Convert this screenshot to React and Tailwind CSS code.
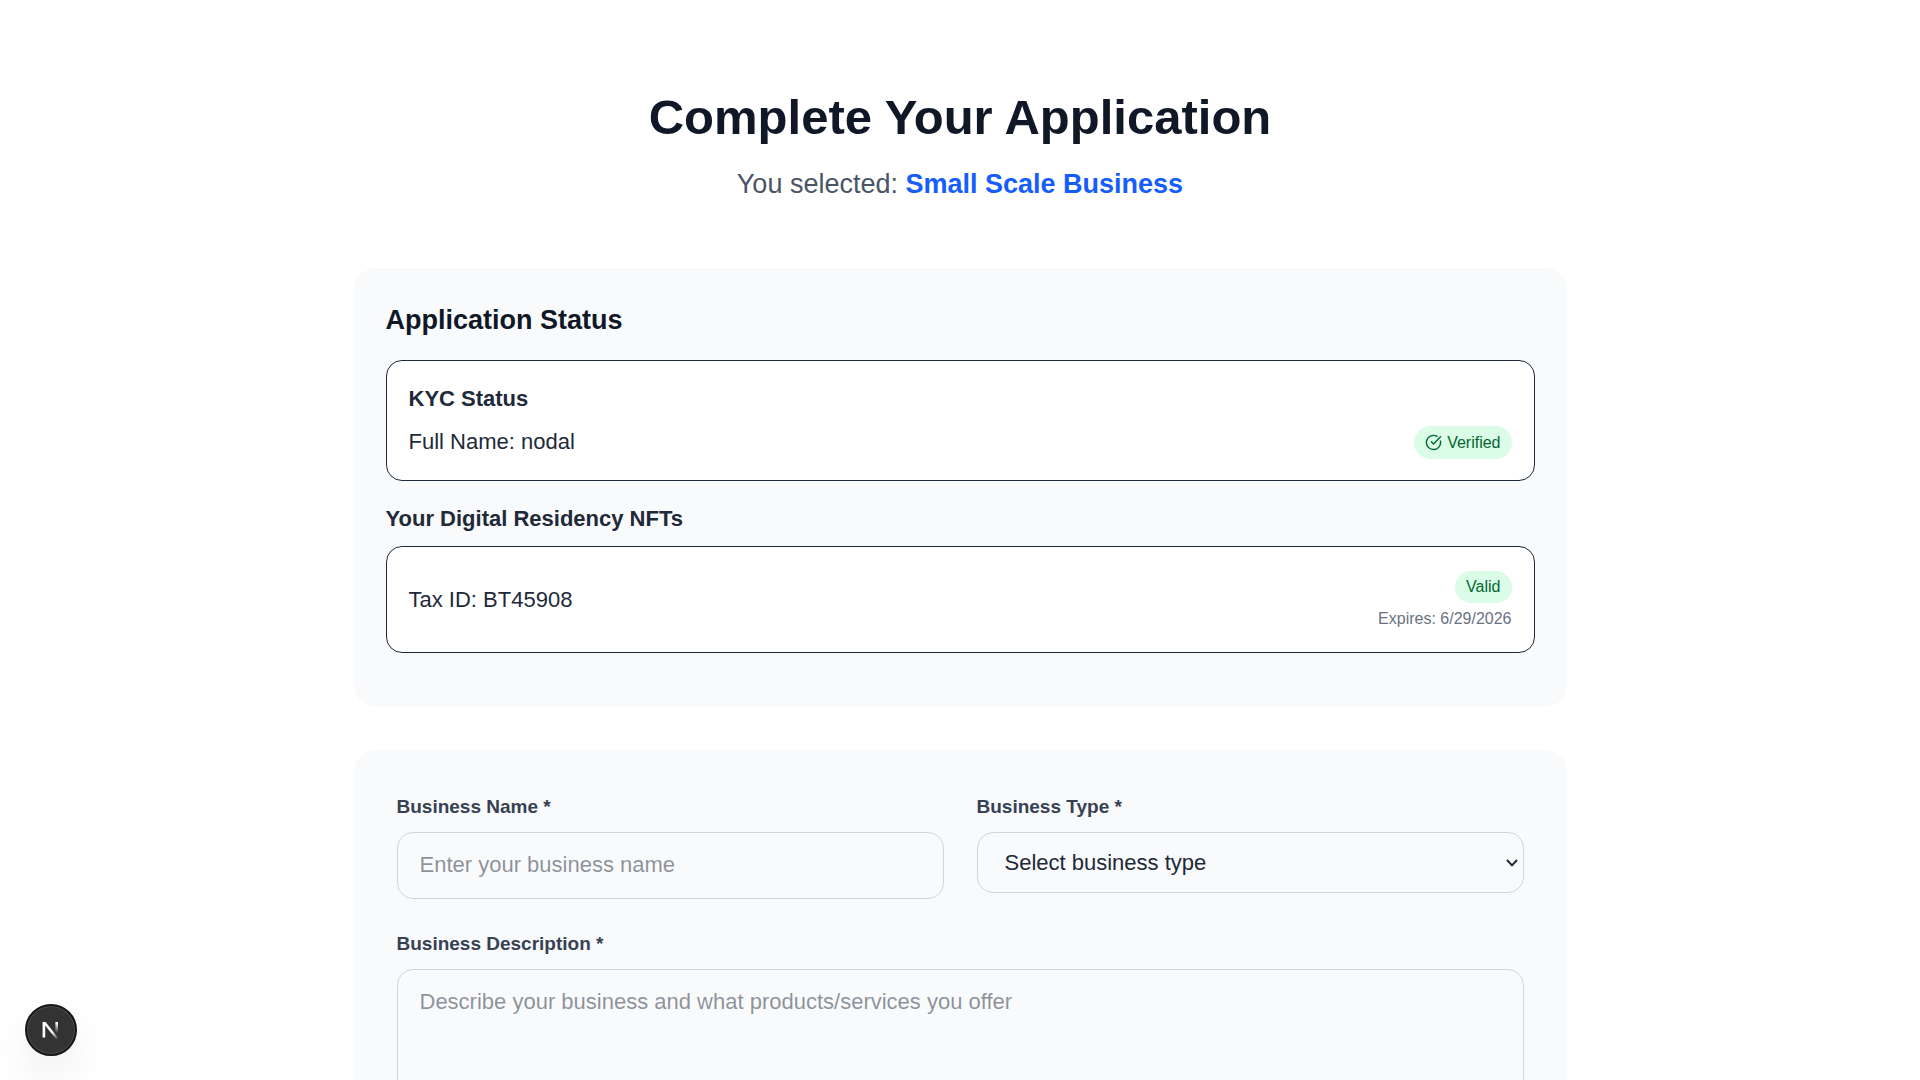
import { CircleCheckBig } from "lucide-react";

const labelClass = "mb-[13px] block text-[19px] leading-[25px] font-semibold text-gray-700";
const fieldClass = "block w-full rounded-[16px] border border-gray-300 bg-gray-50 text-[22px] leading-[31px] text-gray-800";

function NextBadge() {
  return (
    <button
      type="button"
      aria-label="Open Next.js Dev Tools"
      className="fixed bottom-6 left-[25px] flex size-[52px] items-center justify-center rounded-full border-2 border-[#171717] bg-[#333333] shadow-[inset_0_0_0_1px_#4d4d4d,0_20px_40px_rgba(0,0,0,0.07)]"
    >
      <svg width="24" height="24" viewBox="0 0 24 24" fill="none" aria-hidden="true">
        <defs>
          <linearGradient id="stem" x1="17" y1="5" x2="17" y2="15" gradientUnits="userSpaceOnUse">
            <stop stopColor="#fff" />
            <stop offset="1" stopColor="#fff" stopOpacity="0" />
          </linearGradient>
          <linearGradient id="diagonal" x1="13" y1="14" x2="18" y2="21" gradientUnits="userSpaceOnUse">
            <stop stopColor="#fff" />
            <stop offset="1" stopColor="#fff" stopOpacity="0.1" />
          </linearGradient>
        </defs>
        <path d="M3.6 4H6.6L19.2 20L17.4 21.6L6.2 7.4V19.5H3.6Z" fill="url(#diagonal)" />
        <path d="M16.4 4H19V16H16.4Z" fill="url(#stem)" />
      </svg>
    </button>
  );
}

function StatusCard() {
  return (
    <section className="mb-[43px] rounded-[22px] bg-gray-50 px-8 pt-[33px] pb-[54px]">
      <h2 className="mb-[21px] text-[27px] leading-[38px] font-bold text-gray-900">Application Status</h2>
      <div className="mb-[22px] rounded-[16px] border border-gray-800 bg-white px-[22px] pt-[22px] pb-[21px]">
        <h3 className="mb-[11px] text-[22px] leading-8 font-semibold">KYC Status</h3>
        <div className="flex items-start justify-between">
          <p className="text-[22px] leading-[31px]">Full Name: nodal</p>
          <span className="flex items-center gap-[5px] rounded-full bg-green-100 px-[11px] py-[5px] text-[16px] leading-[23px] text-green-800">
            <CircleCheckBig size={17} aria-hidden="true" />
            Verified
          </span>
        </div>
      </div>
      <h3 className="mb-[11px] text-[22px] leading-8 font-semibold">Your Digital Residency NFTs</h3>
      <div className="flex items-center justify-between rounded-[16px] border border-gray-800 bg-white p-[22px]">
        <p className="text-[22px] leading-[31px]">Tax ID: BT45908</p>
        <div className="flex flex-col items-end pt-[2px] text-[16px]">
          <span className="rounded-full bg-green-100 px-[11px] py-[5px] leading-[22px] text-green-800">Valid</span>
          <p className="mt-[5px] leading-[22px] text-gray-500">Expires: 6/29/2026</p>
        </div>
      </div>
    </section>
  );
}

function BusinessForm() {
  return (
    <form className="rounded-[22px] bg-gray-50 px-[43px] pt-11 pb-[43px]">
      <div className="mb-8 grid grid-cols-2 items-start gap-[33px]">
        <div>
          <label htmlFor="name" className={labelClass}>Business Name *</label>
          <input id="name" type="text" placeholder="Enter your business name" className={`${fieldClass} px-[22px] pt-4 pb-[18px]`} />
        </div>
        <div>
          <label htmlFor="type" className={labelClass}>Business Type *</label>
          <div className="relative">
            <select id="type" defaultValue="" className={`${fieldClass} appearance-none py-[14px] pr-10 pl-[27px]`}>
              <option value="">Select business type</option>
            </select>
            <svg className="pointer-events-none absolute inset-y-0 right-[6px] my-auto" width="12" height="8" viewBox="0 0 12 8" fill="none" stroke="#1e2939" strokeWidth="2" aria-hidden="true">
              <path d="M1 1L6 6.4L11 1" />
            </svg>
          </div>
        </div>
      </div>
      <label htmlFor="description" className={labelClass}>Business Description *</label>
      <textarea id="description" rows={4} placeholder="Describe your business and what products/services you offer" className={`${fieldClass} px-[22px] py-4`} />
    </form>
  );
}

export default function App() {
  return (
    <div className="h-screen overflow-hidden bg-white font-['Liberation_Sans',Arial,sans-serif] text-gray-800">
      <main className="mx-auto max-w-[1213px] pt-[90px]">
        <header className="mb-16 text-center">
          <h1 className="mb-[22px] text-[49px] leading-[54px] font-bold text-gray-900">Complete Your Application</h1>
          <p className="pb-[2px] text-[27px] leading-9 text-gray-600">
            You selected: <span className="font-semibold text-blue-600">Small Scale Business</span>
          </p>
        </header>
        <StatusCard />
        <BusinessForm />
      </main>
      <NextBadge />
    </div>
  );
}
